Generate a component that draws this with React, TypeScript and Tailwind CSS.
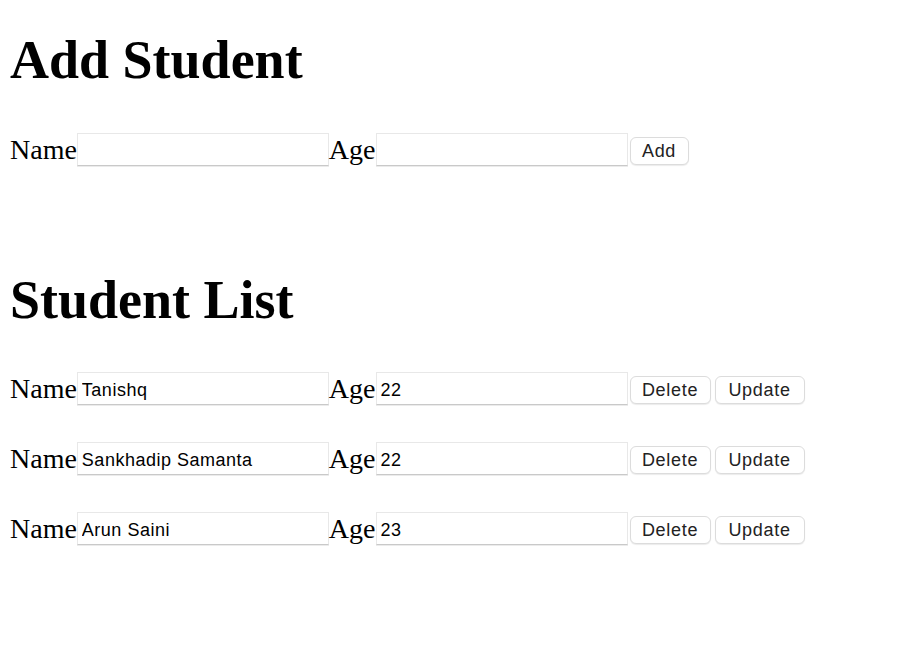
import React from "react";

const students = [
  { name: "Tanishq", age: "22" },
  { name: "Sankhadip Samanta", age: "22" },
  { name: "Arun Saini", age: "23" },
];

const inputCls =
  "w-[252px] h-[33px] border border-[#e8e8e8] border-b-[#c9c9c9] bg-white pl-[4px] pr-[4px] pt-[3px] text-[18px] tracking-[0.5px] text-black outline-none shadow-[0_1px_0_rgba(0,0,0,0.08)] [font-family:'Liberation_Sans',Arial,sans-serif]";
const btnCls =
  "h-[28px] rounded-[6px] border border-[#dcdcdc] bg-white p-0 text-center text-[18px] leading-[26px] tracking-[0.7px] text-[#222] shadow-[0_1px_1px_rgba(0,0,0,0.08)] [font-family:'Liberation_Sans',Arial,sans-serif]";

const widths: Record<string, string> = {
  Add: "w-[59px]",
  Delete: "w-[81px]",
  Update: "w-[90px]",
};

function Row({ name, age, buttons, mt }: { name: string; age: string; buttons: string[]; mt: string }) {
  return (
    <div className={`flex h-[33px] items-center ${mt}`}>
      <span className="text-[28px] leading-[28px]">Name</span>
      <input className={inputCls} defaultValue={name} />
      <span className="text-[28px] leading-[28px]">Age</span>
      <input className={inputCls} defaultValue={age} />
      <div className="ml-[2px] flex translate-y-[1px] gap-[4px]">
        {buttons.map((b) => (
          <button key={b} className={`${btnCls} ${widths[b]}`}>
            {b}
          </button>
        ))}
      </div>
    </div>
  );
}

export default function App() {
  return (
    <div className="min-h-[658px] bg-white px-[10px] text-black [font-family:'Liberation_Serif','Times_New_Roman',serif]">
      <h1 className="pt-[29px] text-[54px] font-bold leading-[62px]">Add Student</h1>
      <Row name="" age="" buttons={["Add"]} mt="mt-[42px]" />
      <h1 className="mt-[103px] text-[54px] font-bold leading-[62px]">Student List</h1>
      <Row name={students[0].name} age={students[0].age} buttons={["Delete", "Update"]} mt="mt-[41px]" />
      <Row name={students[1].name} age={students[1].age} buttons={["Delete", "Update"]} mt="mt-[37px]" />
      <Row name={students[2].name} age={students[2].age} buttons={["Delete", "Update"]} mt="mt-[37px]" />
    </div>
  );
}
